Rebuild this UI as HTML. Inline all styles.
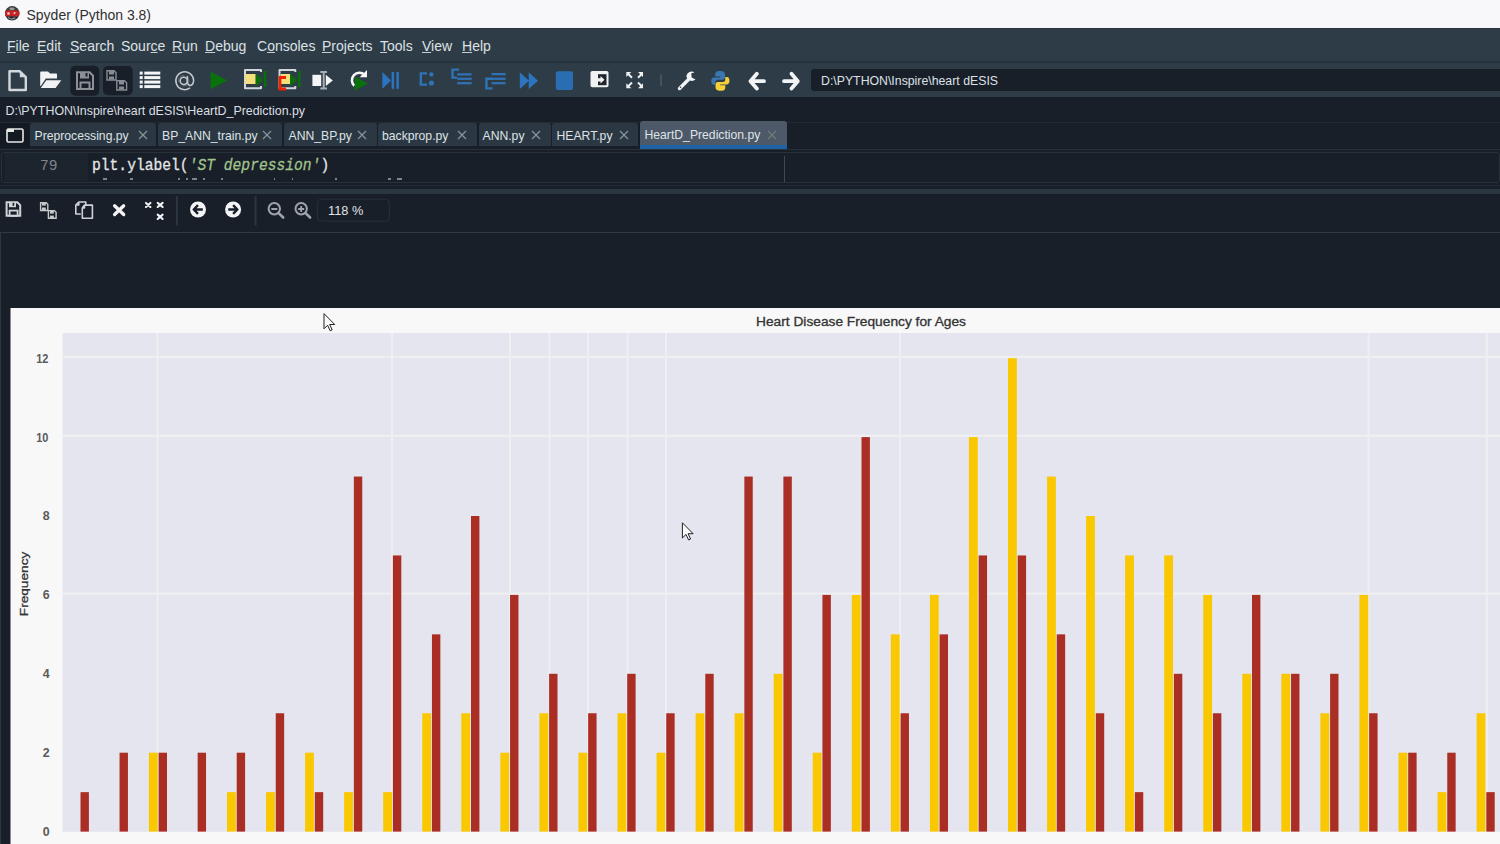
<!DOCTYPE html>
<html><head><meta charset="utf-8">
<style>
*{margin:0;padding:0;box-sizing:border-box}
html,body{width:1500px;height:844px;overflow:hidden;background:#181f29;font-family:"Liberation Sans",sans-serif}
.abs{position:absolute}
.t{position:absolute;white-space:nowrap;line-height:1}
#title{left:0;top:0;width:1500px;height:28px;background:#f8f8fa}
#menu{left:0;top:28px;width:1500px;height:34px;background:#2e3c47;border-top:1px solid #2a3641}
.m{position:absolute;top:10px;font-size:14px;color:#dde1e4;line-height:1}
.m u{text-decoration:underline;text-decoration-color:#c8cdd1;text-underline-offset:1px;text-decoration-thickness:1px}
#tbline{left:0;top:61px;width:1500px;height:2px;background:#25313b}
#tb{left:0;top:63px;width:1500px;height:34px;background:#2e3c47}
#pathin{left:811px;top:68.7px;width:689px;height:22.6px;background:#181f29;border-radius:3px 0 0 3px}
.tab{position:absolute;top:123px;height:23px;background:#2b3843;border-radius:3px 3px 0 0}
.tab .x{position:absolute;top:7px;width:10px;height:10px}
.tabtxt{position:absolute;top:7px;font-size:12.2px;color:#dfe3e6;line-height:1;white-space:nowrap}
</style></head><body>
<div id="title" class="abs">
<svg class="abs" style="left:3px;top:5px" width="18" height="17" viewBox="0 0 18 17">
<circle cx="9.2" cy="8.3" r="7.2" fill="#3a3a3e"/>
<path d="M2 6.5 Q5 4.8 9 5.5 Q13 4.6 16.4 6.5 L16.4 10.5 Q13 12 9 11 Q5 12.2 2 10.5Z" fill="#c42424"/>
<circle cx="5.5" cy="8.5" r="1.3" fill="#f3d0d0"/>
<circle cx="11.5" cy="8" r="1.1" fill="#f0c8c8"/>
<ellipse cx="9" cy="3.8" rx="2.8" ry="1.4" fill="#9a9a9a"/>
<ellipse cx="7.5" cy="13.3" rx="2.6" ry="1.5" fill="#1e2235"/>
<path d="M5 12.5 Q8 15.5 12 13" stroke="#c8c8c8" stroke-width="0.8" fill="none"/>
</svg>
<div class="t" style="left:26.5px;top:7.5px;font-size:14px;color:#303030">Spyder (Python 3.8)</div>
</div>
<div id="menu" class="abs">
<span class="m" style="left:7px"><u>F</u>ile</span>
<span class="m" style="left:37px"><u>E</u>dit</span>
<span class="m" style="left:70px"><u>S</u>earch</span>
<span class="m" style="left:121px">Sour<u>c</u>e</span>
<span class="m" style="left:172px"><u>R</u>un</span>
<span class="m" style="left:205px"><u>D</u>ebug</span>
<span class="m" style="left:257px">C<u>o</u>nsoles</span>
<span class="m" style="left:322px"><u>P</u>rojects</span>
<span class="m" style="left:380px"><u>T</u>ools</span>
<span class="m" style="left:422px"><u>V</u>iew</span>
<span class="m" style="left:462px"><u>H</u>elp</span>
</div>
<div id="tbline" class="abs"></div>
<div id="tb" class="abs"></div>
<div id="pathin" class="abs"></div>
<div class="t" style="left:821px;top:75.3px;font-size:12.3px;color:#dde1e6">D:\PYTHON\Inspire\heart dESIS</div>
<svg class="abs" style="left:0;top:62px" width="810" height="36" viewBox="0 62 810 36">
<!-- new file -->
<path d="M9.5 71.3 H19.8 L25.8 77.2 V90 H9.5Z" fill="none" stroke="#d3d8dc" stroke-width="2.4" stroke-linejoin="round"/>
<path d="M19.8 71.3 V77.2 H25.8Z" fill="#d3d8dc"/>
<!-- open folder -->
<path d="M40.2 86 V72.3 Q40.2 71.4 41.2 71.4 H48 L50 73.6 H56.3 Q57 73.6 57 74.4 V78.6 H45.8 L40.8 86Z" fill="#f2f3f5"/>
<path d="M46.3 80.2 H61.3 L55.6 88 H40.8Z" fill="#f2f3f5"/>
<!-- save btn -->
<rect x="70.3" y="65.7" width="29" height="30" rx="5" fill="#181f29"/>
<path d="M77 72.3 H89.6 L93 75.7 V89 H77Z" fill="none" stroke="#8b9197" stroke-width="2"/>
<rect x="80" y="72" width="9" height="6.5" fill="#8b9197"/>
<rect x="85.5" y="73" width="2" height="3.5" fill="#181f29"/>
<rect x="80.5" y="82.5" width="9" height="6.5" fill="none" stroke="#8b9197" stroke-width="2"/>
<!-- save all btn -->
<rect x="103" y="66" width="29.7" height="29.3" rx="5" fill="#181f29"/>
<g fill="none" stroke="#878d93" stroke-width="1.4">
<path d="M107 70.7 H114 L116 72.7 V80 H107Z"/>
<path d="M116.8 80.7 H124.5 L126.6 82.7 V90 H116.8Z"/>
</g>
<g fill="#878d93">
<rect x="109" y="71" width="5" height="3.5"/><rect x="109" y="76.5" width="5" height="3"/>
<rect x="119" y="81" width="5" height="3.5"/><rect x="119" y="86.5" width="5" height="3"/>
</g>
<!-- list -->
<g fill="#f4f5f6">
<rect x="139.7" y="71.6" width="3" height="3"/><rect x="144.3" y="71.6" width="16" height="3"/>
<rect x="139.7" y="76.1" width="3" height="3"/><rect x="144.3" y="76.1" width="16" height="3"/>
<rect x="139.7" y="80.6" width="3" height="3"/><rect x="144.3" y="80.6" width="16" height="3"/>
<rect x="139.7" y="85.1" width="3" height="3"/><rect x="144.3" y="85.1" width="16" height="3"/>
</g>
<!-- @ -->
<g fill="none" stroke="#c3c8cc" stroke-width="1.5" stroke-linecap="round">
<circle cx="183.8" cy="80.8" r="3.6"/>
<path d="M187.4 76.6 V82.4 Q187.7 85.4 190.3 85.4 Q193.4 85 193.6 80.4 A8.9 8.9 0 1 0 189.6 88.2"/>
<circle cx="183.8" cy="80.8" r="5.2" stroke="#8a9196" stroke-width="0.6" stroke-dasharray="9 6"/>
</g>
<!-- play -->
<path d="M210.7 71.7 V89.3 L227.3 80.5Z" fill="#0a720a"/>
<!-- run cell -->
<path d="M261 72 V70 H245 V88.3 H261 V86" fill="none" stroke="#d2d6da" stroke-width="2" stroke-linejoin="round"/>
<rect x="245.5" y="74" width="10.2" height="10" fill="#f3e07a"/>
<path d="M255.7 73.5 V86.5 L263 80Z" fill="#0b6c0b"/>
<rect x="263.8" y="71" width="2.6" height="16" fill="#0b6c0b"/>
<!-- run cell advance -->
<path d="M295.3 72 V70 H279.5 V88.3 H295.3 V86" fill="none" stroke="#d2d6da" stroke-width="2" stroke-linejoin="round"/>
<rect x="280.7" y="74" width="9.8" height="10" fill="#f3e07a"/>
<path d="M286 77.5 H280 V89 H286" fill="none" stroke="#ee2200" stroke-width="2.8"/>
<path d="M290 73.5 V86.5 L297.3 80Z" fill="#0b6c0b"/>
<rect x="298" y="71" width="2.6" height="16" fill="#0b6c0b"/>
<!-- run selection -->
<rect x="312.4" y="74.8" width="8.8" height="11.2" fill="#f4f5f7"/>
<path d="M320.3 72 H327 M320.3 88.4 H327 M323.7 72 V88.4" stroke="#a9afb5" stroke-width="2"/>
<path d="M325.8 74.8 V86 L332.8 80.4Z" fill="#f4f5f7"/>
<!-- rerun -->
<path d="M354.3 85.8 A7.3 7.3 0 1 1 364.6 74.8" fill="none" stroke="#f6f6f6" stroke-width="2.6"/>
<path d="M367 70 V77.3 H359.7Z" fill="#f6f6f6"/>
<path d="M354.8 76.8 L368 83.6 L354.8 90.4Z" fill="#0a720a"/>
<!-- debug -->
<path d="M382.4 72 V88.8 L391 80.4Z" fill="#2b75c0"/>
<rect x="391.6" y="72" width="2.5" height="16.8" fill="#2b75c0"/>
<rect x="396.4" y="72" width="2.5" height="16.8" fill="#2b75c0"/>
<!-- step -->
<g fill="none" stroke="#2f73b5" stroke-width="2.4">
<path d="M427 73.4 H420.8 V84.6 H427"/>
<path d="M459 69.6 H452.5 V77.6 H457"/>
<path d="M492.5 78.8 H486.4 V88.4 H492.5"/>
</g>
<g fill="#2f73b5">
<circle cx="431.4" cy="74.4" r="2.2"/><circle cx="431.4" cy="83" r="2.6"/>
<rect x="457.2" y="73.3" width="14.4" height="2.2"/><rect x="457.2" y="77.7" width="14.4" height="2.2"/><rect x="457.2" y="82.1" width="14.4" height="2.2"/>
<rect x="491.6" y="73" width="14" height="2.2"/><rect x="491.6" y="77.7" width="14" height="2.2"/><rect x="491.6" y="82.1" width="14" height="2.2"/>
</g>
<!-- continue -->
<path d="M519.8 72.3 V89.1 L529 80.7Z M528.7 72.3 V89.1 L538 80.7Z" fill="#2c74bd"/>
<!-- stop -->
<rect x="555.8" y="71.3" width="17.2" height="18.7" rx="2" fill="#2a6db3"/>
<!-- maximize -->
<rect x="590.5" y="71" width="18" height="16.2" rx="1.8" fill="#f0f1f3"/>
<rect x="598" y="74.2" width="8.5" height="11" fill="#1d252d"/>
<path d="M596 78.2 H600.5 V76 L604.5 79.8 L600.5 83.6 V81.4 H596Z" fill="#f0f1f3"/>
<!-- fullscreen -->
<g stroke="#eef0f2" stroke-width="2" fill="none">
<path d="M627.5 73.2 L632 77.7 M638 77.7 L642.5 73.2 M627.5 87 L632 82.5 M638 82.5 L642.5 87"/>
</g>
<g fill="#eef0f2">
<path d="M626.3 72 H631.3 L626.3 77Z M643 72 H638 L643 77Z M626.3 88.2 H631.3 L626.3 83.2Z M643 88.2 H638 L643 83.2Z"/>
</g>
<!-- separator -->
<rect x="660" y="74.3" width="2" height="11.7" fill="#46525c"/>
<!-- wrench -->
<path d="M679.5 88.5 L688.5 79.5" stroke="#f2f3f5" stroke-width="3.4" stroke-linecap="round"/>
<path d="M686.3 76.2 A5.6 5.6 0 0 0 695.5 79.5 L691.7 77.4 L691.2 73.4 L694.5 72.2 A5.6 5.6 0 0 0 686.3 76.2Z" fill="#f2f3f5"/>
<circle cx="680.5" cy="87.3" r="0.8" fill="#2e3c47"/>
<!-- python -->
<path d="M720 71 C715.5 71 715.2 73 715.2 74.6 V76.5 H720.3 V77.4 H713.5 C711.6 77.4 711.3 79.4 711.3 81.2 C711.3 83 712 84.8 713.6 84.8 H715.2 V82.4 C715.2 80.6 716.6 79.8 718 79.8 H722.8 C724.3 79.8 725 78.7 725 77.3 V74.6 C725 72.6 723.6 71 720 71Z" fill="#3a76b0"/>
<path d="M720.5 90.8 C725 90.8 725.3 88.8 725.3 87.2 V85.3 H720.2 V84.4 H727 C728.9 84.4 729.5 82.4 729.5 80.6 C729.5 78.8 728.5 77 726.9 77 H725.3 V79.4 C725.3 81.2 723.9 82 722.5 82 H717.7 C716.2 82 715.5 83.1 715.5 84.5 V87.2 C715.5 89.2 716.9 90.8 720.5 90.8Z" fill="#f5cf3a"/>
<!-- arrows -->
<g stroke="#f3f4f6" stroke-width="3.8" fill="none" stroke-linecap="round" stroke-linejoin="round">
<path d="M756.8 73.8 L750.5 81.2 L756.8 88.6 M750.5 81.2 H764"/>
<path d="M791.5 73.8 L797.8 81.2 L791.5 88.6 M797.8 81.2 H784"/>
</g>
</svg>

<!-- path bar -->
<div class="t" style="left:5.5px;top:104.5px;font-size:12.4px;color:#dcdfe2">D:\PYTHON\Inspire\heart dESIS\HeartD_Prediction.py</div>
<!-- tabs -->
<div class="abs" style="left:0;top:122px;width:1500px;height:1px;background:#222b34"></div>
<div class="abs" style="left:0;top:123px;width:30px;height:25px;background:#141a22;border-radius:0 3px 0 0"></div>
<svg class="abs" style="left:6px;top:128px" width="18" height="15" viewBox="0 0 18 15"><rect x="1" y="1" width="16" height="13" rx="1.5" fill="none" stroke="#e8e8e8" stroke-width="1.6"/><rect x="1" y="1" width="7" height="3" fill="#e8e8e8"/></svg>
<div class="tab" style="left:30px;width:126px"><span class="tabtxt" style="left:4.5px">Preprocessing.py</span><svg class="x" style="left:108px" viewBox="0 0 10 10"><path d="M1 1L9 9M9 1L1 9" stroke="#8a949c" stroke-width="1.2"/></svg></div>
<div class="tab" style="left:158px;width:124px"><span class="tabtxt" style="left:4px">BP_ANN_train.py</span><svg class="x" style="left:104px" viewBox="0 0 10 10"><path d="M1 1L9 9M9 1L1 9" stroke="#8a949c" stroke-width="1.2"/></svg></div>
<div class="tab" style="left:283.5px;width:93px"><span class="tabtxt" style="left:5px">ANN_BP.py</span><svg class="x" style="left:73px" viewBox="0 0 10 10"><path d="M1 1L9 9M9 1L1 9" stroke="#8a949c" stroke-width="1.2"/></svg></div>
<div class="tab" style="left:378px;width:99px"><span class="tabtxt" style="left:4px">backprop.py</span><svg class="x" style="left:79px" viewBox="0 0 10 10"><path d="M1 1L9 9M9 1L1 9" stroke="#8a949c" stroke-width="1.2"/></svg></div>
<div class="tab" style="left:478.5px;width:72px"><span class="tabtxt" style="left:4px">ANN.py</span><svg class="x" style="left:52px" viewBox="0 0 10 10"><path d="M1 1L9 9M9 1L1 9" stroke="#8a949c" stroke-width="1.2"/></svg></div>
<div class="tab" style="left:551.5px;width:86px"><span class="tabtxt" style="left:5px">HEART.py</span><svg class="x" style="left:67px" viewBox="0 0 10 10"><path d="M1 1L9 9M9 1L1 9" stroke="#8a949c" stroke-width="1.2"/></svg></div>
<div class="tab" style="left:640px;top:121px;height:27px;width:147px;background:#4d5868"><span class="tabtxt" style="left:4.5px;top:8px">HeartD_Prediction.py</span><svg class="x" style="left:127px;top:8.5px" viewBox="0 0 10 10"><path d="M1 1L9 9M9 1L1 9" stroke="#6f7c78" stroke-width="1.2"/></svg><div class="abs" style="left:0;top:23.8px;width:147px;height:3.8px;background:#1f63a6"></div></div>
<div class="abs" style="left:0;top:148.5px;width:1500px;height:1px;background:#28313a"></div>
<!-- editor -->
<div class="abs" style="left:1px;top:152px;width:1499px;height:31px;border:1px solid #27313a;border-radius:3px;background:#181f29"></div>
<div class="abs" style="left:5px;top:153px;width:83px;height:28px;background:#1c242d"></div>
<div class="abs" style="left:784.2px;top:156px;width:1px;height:26px;background:#3f4952"></div>
<div class="t" style="left:40px;top:159px;font-family:'Liberation Mono',monospace;font-size:14.6px;color:#7f858b">79</div>
<div class="t" style="left:92px;top:158.3px;font-family:'Liberation Mono',monospace;font-size:14.65px;color:#e4e6e8;transform:scaleY(1.12);transform-origin:0 0;-webkit-text-stroke:0.25px #e4e6e8">plt.ylabel(<i style="color:#a2c38c;-webkit-text-stroke:0.25px #a2c38c">'ST depression'</i>)</div>
<div class="abs" style="left:103px;top:178.3px;width:3.5px;height:1.5px;background:#7d858c"></div><div class="abs" style="left:129.5px;top:178.3px;width:3px;height:1.5px;background:#7d858c"></div><div class="abs" style="left:178px;top:178.3px;width:1.5px;height:1.5px;background:#7d858c"></div><div class="abs" style="left:186px;top:178.3px;width:1.5px;height:1.5px;background:#7d858c"></div><div class="abs" style="left:192px;top:178.3px;width:4.5px;height:1.5px;background:#7d858c"></div><div class="abs" style="left:203px;top:178.3px;width:1.5px;height:1.5px;background:#7d858c"></div><div class="abs" style="left:220.5px;top:178.3px;width:2px;height:1.5px;background:#7d858c"></div><div class="abs" style="left:273.5px;top:178.3px;width:1.5px;height:1.5px;background:#7d858c"></div><div class="abs" style="left:291.5px;top:178.3px;width:1.5px;height:1.5px;background:#7d858c"></div><div class="abs" style="left:335px;top:178.3px;width:1.5px;height:1.5px;background:#7d858c"></div><div class="abs" style="left:388px;top:178.3px;width:2.5px;height:1.5px;background:#7d858c"></div><div class="abs" style="left:397px;top:178.3px;width:5px;height:1.5px;background:#7d858c"></div>
<!-- separator -->
<div class="abs" style="left:0;top:184.5px;width:1500px;height:1px;background:#252e37"></div>
<div class="abs" style="left:0;top:188.5px;width:1500px;height:5px;background:#2b3740"></div>
<svg class="abs" style="left:0;top:193px" width="400" height="39" viewBox="0 193 400 39">
<!-- save -->
<path d="M6.6 202.2 H17.3 L20.2 205.1 V215.8 H6.6Z" fill="none" stroke="#d0d4d8" stroke-width="2"/>
<rect x="9" y="202" width="7" height="5.2" fill="#d0d4d8"/>
<rect x="12.6" y="202.8" width="1.6" height="3" fill="#181f29"/>
<rect x="9.6" y="210.6" width="8" height="5.2" fill="none" stroke="#d0d4d8" stroke-width="1.8"/>
<!-- save all -->
<g fill="none" stroke="#c6cacd" stroke-width="1.4">
<path d="M40.6 202.7 H46.2 L47.8 204.3 V210.5 H40.6Z"/>
<path d="M48.4 210.6 H54.4 L56.1 212.3 V218.3 H48.4Z"/>
</g>
<g fill="#c6cacd"><rect x="42" y="203" width="3.8" height="2.6"/><rect x="42" y="207.5" width="3.8" height="2.5"/><rect x="50" y="211" width="3.8" height="2.6"/><rect x="50" y="215.6" width="3.8" height="2.5"/></g>
<!-- copy -->
<g fill="none" stroke="#cdd1d5" stroke-width="1.6" stroke-linejoin="round">
<path d="M78.8 202 H85.8 V205 M80.8 214 H75.8 V205 L78.8 202 V205 H75.8"/>
<path d="M84.5 205.1 H92.4 V218.2 H82.3 V208 Z M84.5 205.1 V208 H82.3"/>
</g>
<!-- close x -->
<path d="M114.6 205.8 L123.7 214.5 M123.7 205.8 L114.6 214.5" stroke="#f2f3f5" stroke-width="3.3" stroke-linecap="round"/>
<!-- close all -->
<g stroke="#f2f3f5" stroke-width="2.1" stroke-linecap="round">
<path d="M146 202.9 L150.4 207 M150.4 202.9 L146 207"/>
<path d="M157.7 202.9 L162.6 207 M162.6 202.9 L157.7 207"/>
<path d="M157.7 214.6 L162.6 219 M162.6 214.6 L157.7 219"/>
</g>
<rect x="175.9" y="196" width="2" height="29.5" fill="#2b3640"/>
<rect x="254.6" y="196" width="2" height="29.5" fill="#2b3640"/>
<!-- prev/next -->
<circle cx="198" cy="209.5" r="8" fill="#f3f4f6"/>
<path d="M202.8 209.5 H194 M198 205.2 L193.7 209.5 L198 213.8" fill="none" stroke="#181f29" stroke-width="2.4" stroke-linejoin="round"/>
<circle cx="233.1" cy="209.5" r="8" fill="#f3f4f6"/>
<path d="M228.3 209.5 H237.1 M233.1 205.2 L237.4 209.5 L233.1 213.8" fill="none" stroke="#181f29" stroke-width="2.4" stroke-linejoin="round"/>
<!-- zoom -->
<g fill="none" stroke="#9ea4aa" stroke-width="2">
<circle cx="274.3" cy="208.8" r="5.7"/><path d="M278.4 212.9 L283.2 217.5" stroke-width="2.6" stroke-linecap="round"/>
<circle cx="301.2" cy="208.8" r="5.7"/><path d="M305.3 212.9 L310.1 217.5" stroke-width="2.6" stroke-linecap="round"/>
</g>
<rect x="271.3" y="208" width="6" height="2" fill="#9ea4aa"/>
<path d="M298.2 209 H304.2 M301.2 206 V212" stroke="#9ea4aa" stroke-width="1.8"/>
<!-- zoom box -->
<rect x="317.4" y="199.2" width="72" height="22" rx="4" fill="none" stroke="#27313a" stroke-width="1"/>
<text x="328" y="215.2" font-family="Liberation Sans" font-size="12.6" fill="#e1e4e8" textLength="35.3" lengthAdjust="spacingAndGlyphs">118 %</text>
</svg>

<div class="abs" style="left:0;top:232px;width:1500px;height:1px;background:#2d3943"></div>
<div class="abs" style="left:0;top:233px;width:1px;height:611px;background:#2b3640"></div>
<svg class="abs" style="left:0;top:0" width="1500" height="844" viewBox="0 0 1500 844">
<rect x="10.5" y="308" width="1489.5" height="536" fill="#f8f8f8"/>
<rect x="62.5" y="333" width="1437.5" height="498.8" fill="#e4e5ee"/>
<rect x="62.5" y="355.90" width="1437.5" height="2" fill="#f0f0f2"/>
<rect x="62.5" y="434.80" width="1437.5" height="2" fill="#f0f0f2"/>
<rect x="62.5" y="592.60" width="1437.5" height="2" fill="#f0f0f2"/>
<rect x="156.50" y="333" width="2" height="498.8" fill="#efeff2"/>
<rect x="391.00" y="333" width="2" height="498.8" fill="#efeff2"/>
<rect x="509.00" y="333" width="2" height="498.8" fill="#efeff2"/>
<rect x="548.50" y="333" width="2" height="498.8" fill="#efeff2"/>
<rect x="587.00" y="333" width="2" height="498.8" fill="#efeff2"/>
<rect x="626.50" y="333" width="2" height="498.8" fill="#efeff2"/>
<rect x="665.00" y="333" width="2" height="498.8" fill="#efeff2"/>
<rect x="899.00" y="333" width="2" height="498.8" fill="#efeff2"/>
<rect x="1367.60" y="333" width="2" height="498.8" fill="#efeff2"/>
<rect x="1485.70" y="333" width="2" height="498.8" fill="#efeff2"/>
<rect x="80.50" y="792.15" width="8.4" height="39.45" fill="#ab2e24"/>
<rect x="119.55" y="752.70" width="8.4" height="78.90" fill="#ab2e24"/>
<rect x="148.90" y="752.70" width="8.8" height="78.90" fill="#fac800"/>
<rect x="158.60" y="752.70" width="8.4" height="78.90" fill="#ab2e24"/>
<rect x="197.65" y="752.70" width="8.4" height="78.90" fill="#ab2e24"/>
<rect x="227.00" y="792.15" width="8.8" height="39.45" fill="#fac800"/>
<rect x="236.70" y="752.70" width="8.4" height="78.90" fill="#ab2e24"/>
<rect x="266.05" y="792.15" width="8.8" height="39.45" fill="#fac800"/>
<rect x="275.75" y="713.25" width="8.4" height="118.35" fill="#ab2e24"/>
<rect x="305.10" y="752.70" width="8.8" height="78.90" fill="#fac800"/>
<rect x="314.80" y="792.15" width="8.4" height="39.45" fill="#ab2e24"/>
<rect x="344.15" y="792.15" width="8.8" height="39.45" fill="#fac800"/>
<rect x="353.85" y="476.55" width="8.4" height="355.05" fill="#ab2e24"/>
<rect x="383.20" y="792.15" width="8.8" height="39.45" fill="#fac800"/>
<rect x="392.90" y="555.45" width="8.4" height="276.15" fill="#ab2e24"/>
<rect x="422.25" y="713.25" width="8.8" height="118.35" fill="#fac800"/>
<rect x="431.95" y="634.35" width="8.4" height="197.25" fill="#ab2e24"/>
<rect x="461.30" y="713.25" width="8.8" height="118.35" fill="#fac800"/>
<rect x="471.00" y="516.00" width="8.4" height="315.60" fill="#ab2e24"/>
<rect x="500.35" y="752.70" width="8.8" height="78.90" fill="#fac800"/>
<rect x="510.05" y="594.90" width="8.4" height="236.70" fill="#ab2e24"/>
<rect x="539.40" y="713.25" width="8.8" height="118.35" fill="#fac800"/>
<rect x="549.10" y="673.80" width="8.4" height="157.80" fill="#ab2e24"/>
<rect x="578.45" y="752.70" width="8.8" height="78.90" fill="#fac800"/>
<rect x="588.15" y="713.25" width="8.4" height="118.35" fill="#ab2e24"/>
<rect x="617.50" y="713.25" width="8.8" height="118.35" fill="#fac800"/>
<rect x="627.20" y="673.80" width="8.4" height="157.80" fill="#ab2e24"/>
<rect x="656.55" y="752.70" width="8.8" height="78.90" fill="#fac800"/>
<rect x="666.25" y="713.25" width="8.4" height="118.35" fill="#ab2e24"/>
<rect x="695.60" y="713.25" width="8.8" height="118.35" fill="#fac800"/>
<rect x="705.30" y="673.80" width="8.4" height="157.80" fill="#ab2e24"/>
<rect x="734.65" y="713.25" width="8.8" height="118.35" fill="#fac800"/>
<rect x="744.35" y="476.55" width="8.4" height="355.05" fill="#ab2e24"/>
<rect x="773.70" y="673.80" width="8.8" height="157.80" fill="#fac800"/>
<rect x="783.40" y="476.55" width="8.4" height="355.05" fill="#ab2e24"/>
<rect x="812.75" y="752.70" width="8.8" height="78.90" fill="#fac800"/>
<rect x="822.45" y="594.90" width="8.4" height="236.70" fill="#ab2e24"/>
<rect x="851.80" y="594.90" width="8.8" height="236.70" fill="#fac800"/>
<rect x="861.50" y="437.10" width="8.4" height="394.50" fill="#ab2e24"/>
<rect x="890.85" y="634.35" width="8.8" height="197.25" fill="#fac800"/>
<rect x="900.55" y="713.25" width="8.4" height="118.35" fill="#ab2e24"/>
<rect x="929.90" y="594.90" width="8.8" height="236.70" fill="#fac800"/>
<rect x="939.60" y="634.35" width="8.4" height="197.25" fill="#ab2e24"/>
<rect x="968.95" y="437.10" width="8.8" height="394.50" fill="#fac800"/>
<rect x="978.65" y="555.45" width="8.4" height="276.15" fill="#ab2e24"/>
<rect x="1008.00" y="358.20" width="8.8" height="473.40" fill="#fac800"/>
<rect x="1017.70" y="555.45" width="8.4" height="276.15" fill="#ab2e24"/>
<rect x="1047.05" y="476.55" width="8.8" height="355.05" fill="#fac800"/>
<rect x="1056.75" y="634.35" width="8.4" height="197.25" fill="#ab2e24"/>
<rect x="1086.10" y="516.00" width="8.8" height="315.60" fill="#fac800"/>
<rect x="1095.80" y="713.25" width="8.4" height="118.35" fill="#ab2e24"/>
<rect x="1125.15" y="555.45" width="8.8" height="276.15" fill="#fac800"/>
<rect x="1134.85" y="792.15" width="8.4" height="39.45" fill="#ab2e24"/>
<rect x="1164.20" y="555.45" width="8.8" height="276.15" fill="#fac800"/>
<rect x="1173.90" y="673.80" width="8.4" height="157.80" fill="#ab2e24"/>
<rect x="1203.25" y="594.90" width="8.8" height="236.70" fill="#fac800"/>
<rect x="1212.95" y="713.25" width="8.4" height="118.35" fill="#ab2e24"/>
<rect x="1242.30" y="673.80" width="8.8" height="157.80" fill="#fac800"/>
<rect x="1252.00" y="594.90" width="8.4" height="236.70" fill="#ab2e24"/>
<rect x="1281.35" y="673.80" width="8.8" height="157.80" fill="#fac800"/>
<rect x="1291.05" y="673.80" width="8.4" height="157.80" fill="#ab2e24"/>
<rect x="1320.40" y="713.25" width="8.8" height="118.35" fill="#fac800"/>
<rect x="1330.10" y="673.80" width="8.4" height="157.80" fill="#ab2e24"/>
<rect x="1359.45" y="594.90" width="8.8" height="236.70" fill="#fac800"/>
<rect x="1369.15" y="713.25" width="8.4" height="118.35" fill="#ab2e24"/>
<rect x="1398.50" y="752.70" width="8.8" height="78.90" fill="#fac800"/>
<rect x="1408.20" y="752.70" width="8.4" height="78.90" fill="#ab2e24"/>
<rect x="1437.55" y="792.15" width="8.8" height="39.45" fill="#fac800"/>
<rect x="1447.25" y="752.70" width="8.4" height="78.90" fill="#ab2e24"/>
<rect x="1476.60" y="713.25" width="8.8" height="118.35" fill="#fac800"/>
<rect x="1486.30" y="792.15" width="8.4" height="39.45" fill="#ab2e24"/>
<text x="49.6" y="836.00" text-anchor="end" font-family="Liberation Sans" font-weight="bold" font-size="13.5" textLength="6.9" lengthAdjust="spacingAndGlyphs" fill="#5a5a5a">0</text>
<text x="49.6" y="757.10" text-anchor="end" font-family="Liberation Sans" font-weight="bold" font-size="13.5" textLength="6.9" lengthAdjust="spacingAndGlyphs" fill="#5a5a5a">2</text>
<text x="49.6" y="678.20" text-anchor="end" font-family="Liberation Sans" font-weight="bold" font-size="13.5" textLength="6.9" lengthAdjust="spacingAndGlyphs" fill="#5a5a5a">4</text>
<text x="49.6" y="599.30" text-anchor="end" font-family="Liberation Sans" font-weight="bold" font-size="13.5" textLength="6.9" lengthAdjust="spacingAndGlyphs" fill="#5a5a5a">6</text>
<text x="49.6" y="520.40" text-anchor="end" font-family="Liberation Sans" font-weight="bold" font-size="13.5" textLength="6.9" lengthAdjust="spacingAndGlyphs" fill="#5a5a5a">8</text>
<text x="48.4" y="441.50" text-anchor="end" font-family="Liberation Sans" font-weight="bold" font-size="13.5" textLength="12.2" lengthAdjust="spacingAndGlyphs" fill="#5a5a5a">10</text>
<text x="48.4" y="362.60" text-anchor="end" font-family="Liberation Sans" font-weight="bold" font-size="13.5" textLength="12.2" lengthAdjust="spacingAndGlyphs" fill="#5a5a5a">12</text>
<text x="756" y="325.9" font-family="Liberation Sans" font-size="12.5" textLength="210" lengthAdjust="spacingAndGlyphs" fill="#333" stroke="#333" stroke-width="0.3">Heart Disease Frequency for Ages</text>
<text transform="translate(27.8,616.2) rotate(-90)" x="0" y="0" font-family="Liberation Sans" font-size="11.5" textLength="64.5" lengthAdjust="spacingAndGlyphs" fill="#333" stroke="#333" stroke-width="0.3">Frequency</text>
<path transform="translate(324,313.6)" d="M0 0 L0 15.2 L3.6 11.6 L6.2 17.2 L8.2 16.3 L5.7 10.9 L10.7 10.9Z" fill="#fafafa" stroke="#222" stroke-width="1" stroke-linejoin="round"/>
<path transform="translate(682.4,522.8)" d="M0 0 L0 15.2 L3.6 11.6 L6.2 17.2 L8.2 16.3 L5.7 10.9 L10.7 10.9Z" fill="#fafafa" stroke="#222" stroke-width="1" stroke-linejoin="round"/>
</svg>
</body></html>
